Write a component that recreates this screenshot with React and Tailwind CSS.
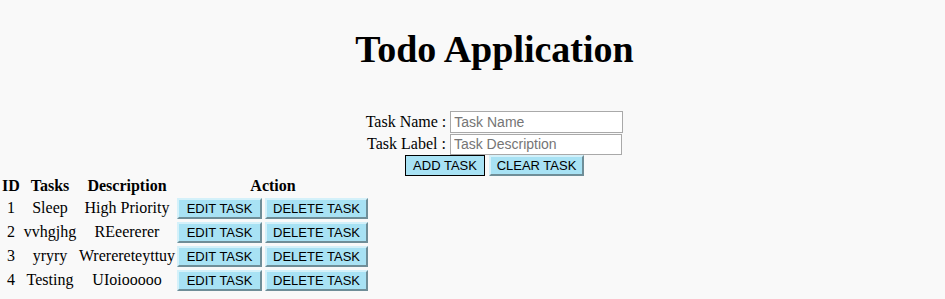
const tasks = [
  { id: 1, name: 'Sleep', desc: 'High Priority', h: 'h-[24px]' },
  { id: 2, name: 'vvhgjhg', desc: 'REeererer', h: 'h-[23px]' },
  { id: 3, name: 'yryry', desc: 'Wrerereteyttuy', h: 'h-[24px]' },
  { id: 4, name: 'Testing', desc: 'UIoiooooo', h: 'h-[23px]' },
];

const btn =
  "h-[21px] bg-[#a8e2f4] border-2 border-t-[#d4f1fa] border-l-[#d4f1fa] border-b-[#6f8e98] border-r-[#6f8e98] text-[13px] leading-none text-black font-['Liberation_Sans',Arial,sans-serif] flex items-center justify-center";

export default function App() {
  return (
    <div className="min-h-[299px] bg-[#f9f9f9] text-black font-['Liberation_Serif','Times_New_Roman',serif]">
      <div className="pl-[44px]">
        <h1 className="pt-[30px] text-center text-[38px] leading-[38px] font-bold">Todo Application</h1>

        {/* form */}
        <div className="mt-[43px] flex flex-col items-center text-[16px]">
          <div className="h-[22px] flex items-center gap-[4px]">
            <span>Task Name :</span>
            <input
              placeholder="Task Name"
              className="w-[173px] h-[22px] bg-white border border-[#a9a9a9] px-[3px] text-[14px] font-['Liberation_Sans',Arial,sans-serif] placeholder:text-[#757575] outline-none"
            />
          </div>
          <div className="h-[22px] flex items-center gap-[4px]">
            <span>Task Label :</span>
            <input
              placeholder="Task Description"
              className="w-[172px] h-[21px] bg-white border border-[#a9a9a9] px-[3px] text-[14px] font-['Liberation_Sans',Arial,sans-serif] placeholder:text-[#757575] outline-none"
            />
          </div>
          <div className="h-[20px] flex items-center gap-[4px]">
            <button className={btn + ' w-[80px] !border-black !border-[1.5px] h-[20px]'}>ADD TASK</button>
            <button className={btn + ' w-[95px] h-[20px]'}>CLEAR TASK</button>
          </div>
        </div>
      </div>

      {/* task table */}
      <table className="mt-[1px] border-collapse text-[16px]">
        <thead>
          <tr className="h-[20px] font-bold">
            <th className="w-[22px] p-0 leading-[20px]">ID</th>
            <th className="w-[56px] p-0 leading-[20px]">Tasks</th>
            <th className="w-[98px] p-0 leading-[20px]">Description</th>
            <th className="w-[194px] p-0 leading-[20px]">Action</th>
          </tr>
        </thead>
        <tbody>
          {tasks.map((t) => (
            <tr key={t.id} className={t.h}>
              <td className="p-0 text-center">{t.id}</td>
              <td className="p-0 text-center">{t.name}</td>
              <td className="p-0 text-center whitespace-nowrap">{t.desc}</td>
              <td className="p-0 pl-[1px]">
                <div className="flex gap-[3px]">
                  <button className={btn + ' w-[85px]'}>EDIT TASK</button>
                  <button className={btn + ' w-[103px]'}>DELETE TASK</button>
                </div>
              </td>
            </tr>
          ))}
        </tbody>
      </table>
    </div>
  );
}
